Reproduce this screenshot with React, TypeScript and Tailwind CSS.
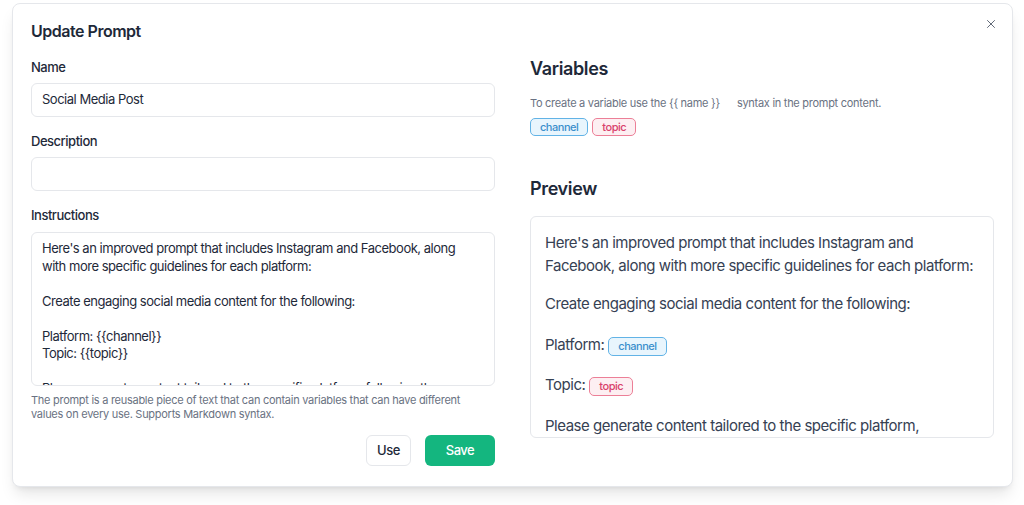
import { X } from "lucide-react";

const font = { fontFamily: "Inter, 'Noto Sans', sans-serif" };

const blueBadge = "border-[#62b3e6] bg-[#e8f5fd] text-[#3a8fcc]";
const pinkBadge = "border-[#ec7f97] bg-[#fdeff2] text-[#d9416b]";

const Badge = ({ label, tone }: { label: string; tone: "blue" | "pink" }) => (
    <span
        className={
            "inline-flex h-[18px] items-center rounded-[5px] border px-[9px] text-[11px] font-medium " +
            (tone === "blue" ? blueBadge : pinkBadge)
        }
    >
        {label}
    </span>
);

const Field = ({ label, value }: { label: string; value?: string }) => (
    <div className="mb-[15px]">
        <label className="block text-[13px] leading-[18px] font-medium text-gray-800">{label}</label>
        <div className="mt-[7px] flex h-[34px] items-center rounded-md border border-gray-200 bg-white px-[10px] text-[13px] text-gray-800">
            {value}
        </div>
    </div>
);

const instructions = [
    "Here's an improved prompt that includes Instagram and Facebook, along",
    "with more specific guidelines for each platform:",
    "",
    "Create engaging social media content for the following:",
    "",
    "Platform: {{channel}}",
    "Topic: {{topic}}",
    "",
    "Please generate content tailored to the specific platform, following these",
];

export default function App() {
    return (
        <div className="min-h-screen bg-white pl-[12px] pt-[3px]" style={font}>
            <div className="relative w-[1001px] rounded-lg border border-gray-200 bg-white px-[18px] pt-[16px] pb-[20px] tracking-[-0.03em] shadow-lg">
                <button className="absolute right-[14px] top-[13px] text-gray-600">
                    <X size={14} strokeWidth={1.5} />
                </button>

                <h2 className="text-[16px] leading-[22px] font-semibold text-gray-800">Update Prompt</h2>

                <div className="mt-[16px] grid grid-cols-2 gap-x-[35px]">
                    {/* left: form */}
                    <div>
                        <Field label="Name" value="Social Media Post" />
                        <Field label="Description" />

                        <label className="block text-[13px] leading-[18px] font-medium text-gray-800">Instructions</label>
                        <div className="mt-[8px] h-[154px] overflow-hidden rounded-md border border-gray-200 bg-white px-[10px] pt-[7px] text-[13px] leading-[17.5px] text-gray-800">
                            {instructions.map((line, i) => (
                                <div key={i} className="h-[17.5px] whitespace-nowrap">
                                    {line}
                                </div>
                            ))}
                        </div>
                        <p className="mt-[7px] text-[11px] leading-[14px] tracking-[-0.025em] text-gray-500">
                            The prompt is a reusable piece of text that can contain variables that can have different
                            <br />
                            values on every use. Supports Markdown syntax.
                        </p>

                        <div className="mt-[14px] flex justify-end gap-[14px]">
                            <button className="h-[31px] w-[45px] rounded-md border border-gray-200 bg-white text-[13px] font-medium text-gray-800">
                                Use
                            </button>
                            <button className="h-[31px] w-[70px] rounded-md bg-[#14b67f] text-[13px] font-medium text-white">
                                Save
                            </button>
                        </div>
                    </div>

                    {/* right: variables + preview */}
                    <div>
                        <h3 className="text-[18px] leading-[22px] font-semibold tracking-[-0.02em] text-gray-800">Variables</h3>
                        <p className="mt-[16px] text-[11px] leading-[14px] tracking-[-0.025em] text-gray-500">
                            To create a variable use the {"{{ name }}"}
                            <span className="ml-[17px]">syntax in the prompt content.</span>
                        </p>
                        <div className="mt-[8px] flex gap-[4px]">
                            <Badge label="channel" tone="blue" />
                            <Badge label="topic" tone="pink" />
                        </div>

                        <h3 className="mt-[42px] text-[18px] leading-[22px] font-semibold tracking-[-0.02em] text-gray-800">Preview</h3>
                        <div className="mt-[16px] h-[222px] overflow-hidden rounded-md border border-gray-200 bg-white px-[14px] pt-[14px] text-[15px] leading-[23px] text-gray-700">
                            <p className="whitespace-nowrap">
                                Here's an improved prompt that includes Instagram and
                                <br />
                                Facebook, along with more specific guidelines for each platform:
                            </p>
                            <p className="mt-[15px] whitespace-nowrap">Create engaging social media content for the following:</p>
                            <p className="mt-[16px] flex h-[26px] items-center gap-[4px]">
                                Platform:
                                <span className={"mt-[4px] inline-flex h-[19px] items-center rounded-[5px] border px-[9px] text-[11px] font-medium " + blueBadge}>
                                    channel
                                </span>
                            </p>
                            <p className="mt-[14px] flex h-[26px] items-center gap-[4px]">
                                Topic:
                                <span className={"mt-[4px] inline-flex h-[19px] items-center rounded-[5px] border px-[9px] text-[11px] font-medium " + pinkBadge}>
                                    topic
                                </span>
                            </p>
                            <p className="mt-[17px] whitespace-nowrap">
                                Please generate content tailored to the specific platform,
                                <br />
                                following these guidelines:
                            </p>
                        </div>
                    </div>
                </div>
            </div>
        </div>
    );
}
